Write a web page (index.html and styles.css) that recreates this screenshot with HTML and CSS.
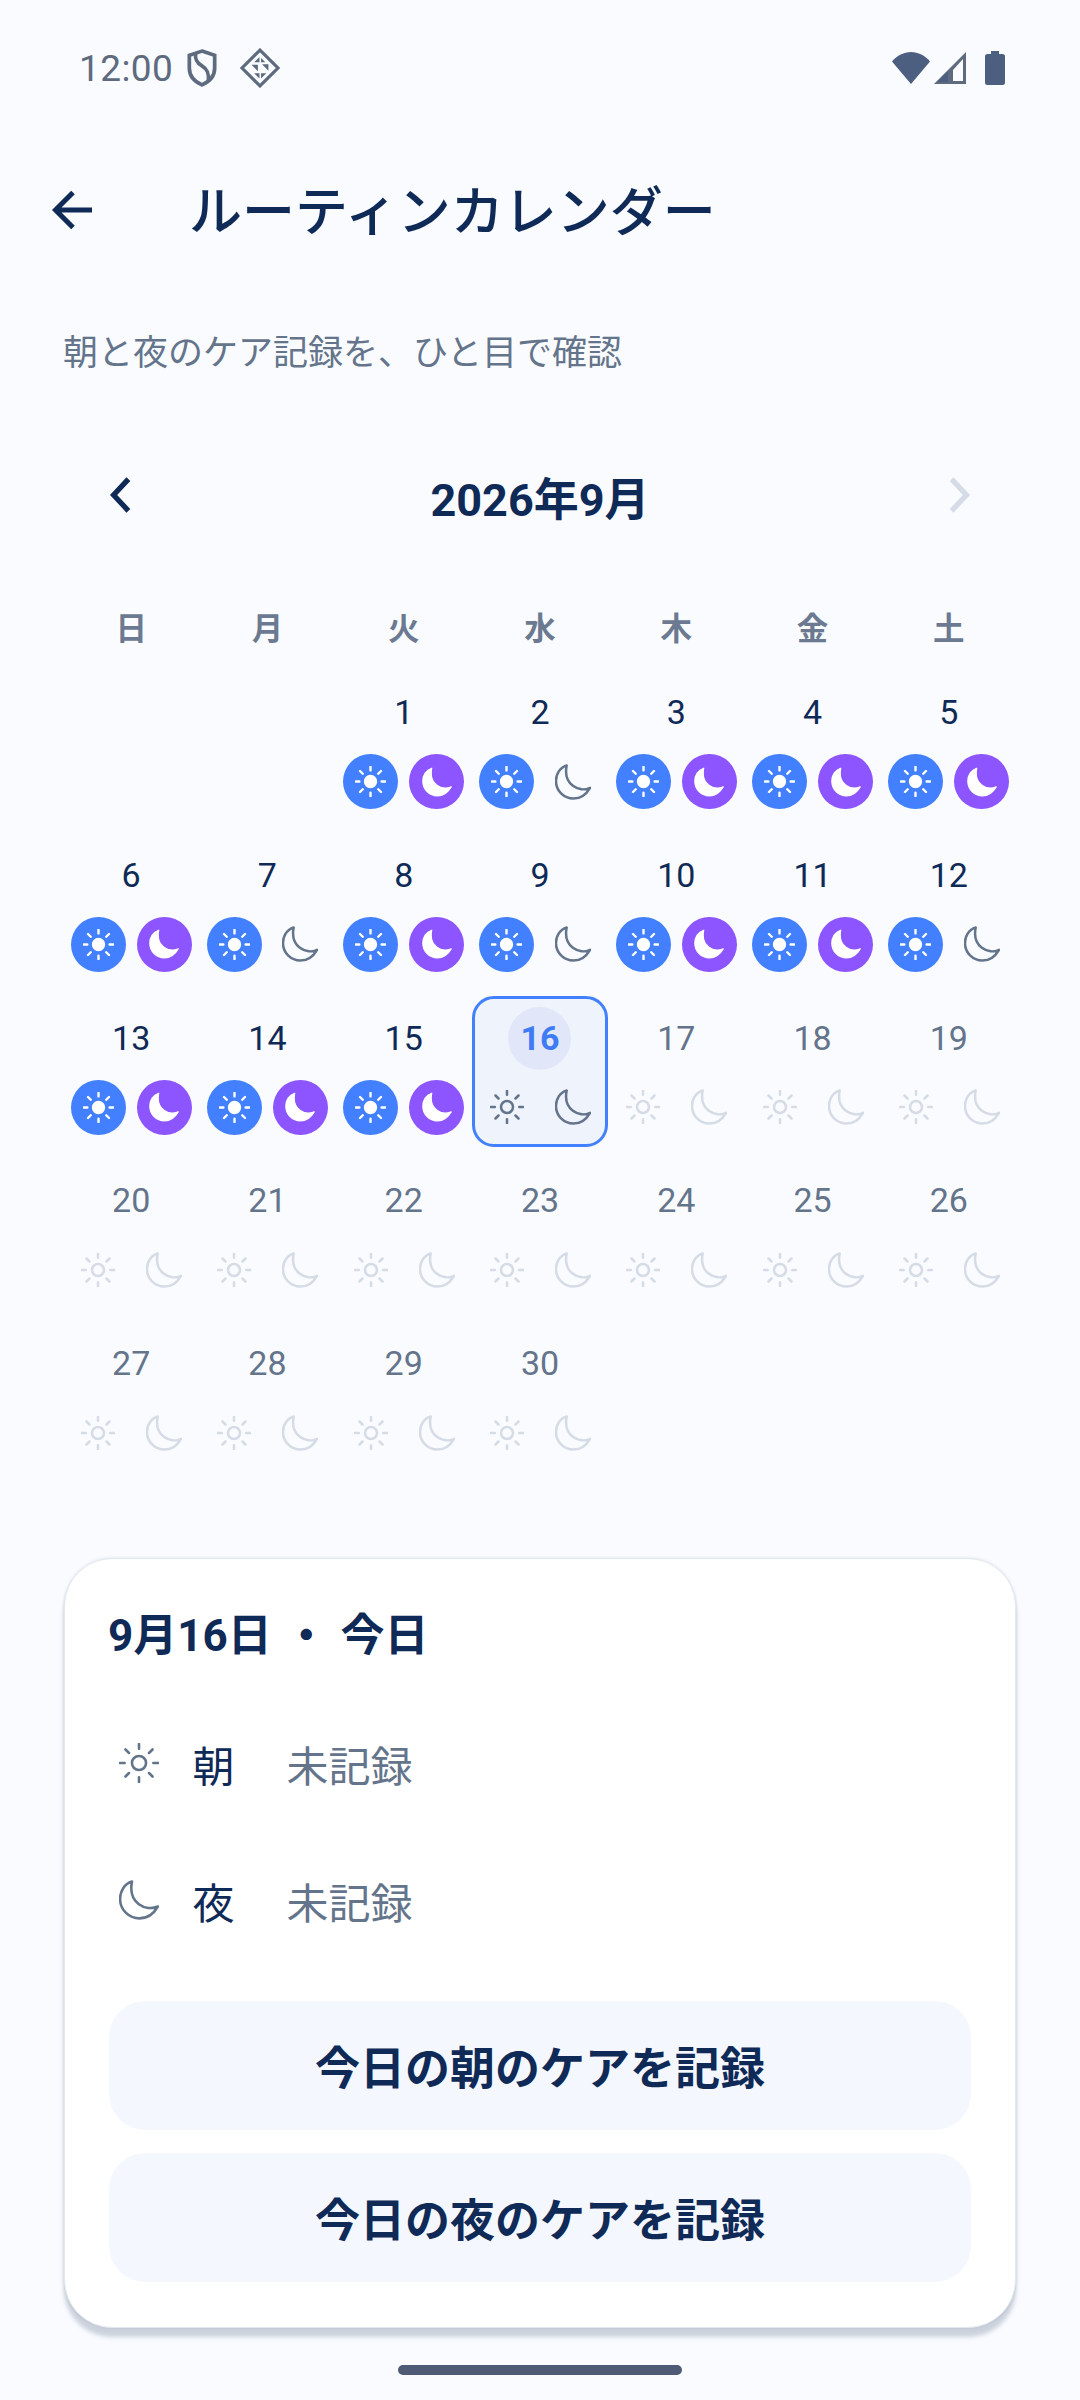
FILE: index.html
```html
<!DOCTYPE html>
<html lang="ja">
<head>
    <meta charset="UTF-8">
    <meta name="viewport" content="width=device-width, initial-scale=1.0">
    <title>ルーティンカレンダー</title>
    <link rel="stylesheet" href="styles.css">
</head>
<body>
    <svg class="defs" width="0" height="0">
        <symbol id="sun" viewBox="0 0 34 34">
            <circle cx="17" cy="17" r="6"/>
            <path class="rays" d="M17 .8v4M17 29.200v4M.8 17h4M29.200 17h4M5.500 5.500l3 3M25.500 25.500l3 3M5.500 28.500l3-3M25.500 8.500l3-3"/>
        </symbol>
        <symbol id="moon" viewBox="-1 -1 37 36">
            <path d="M11 0C4 2 0 9 0 16c0 10 8 18 18 18 7 0 13-4 17-11C24 28 7 20 11 0z"/>
        </symbol>
    </svg>

    <div class="status">
        <span class="clock">12:00</span>
        <svg class="st-shield" viewBox="0 0 30 36">
            <path d="M15 2l12 4v12c0 8-5 13-12 16C8 31 3 26 3 18V6z"/>
            <path d="M9 4c-1 6 1 9 6 12s7 7 6 15"/>
        </svg>
        <svg class="st-diamond" viewBox="0 0 38 38">
            <path class="line" d="M19 2l17 17-17 17L2 19z"/>
            <path class="tri" d="M18.500 8.500v5h-5zM20 9.500l4 4h-4zM11 16h6v6zM27 15.500v6l-6-6zM13.500 24h5v5zM20 24h5l-5 5z"/>
        </svg>
        <span class="st-right">
            <svg class="st-wifi" viewBox="0 0 38 32"><path d="M19 32L0 9.500C5 3.500 12 0 19 0s14 3.500 19 9.500z"/></svg>
            <svg class="st-signal" viewBox="0 0 32 32"><path class="hollow" d="M32 0v32H0zM29 7L19 18v11h10z"/><path d="M3 30l11-11v11z"/></svg>
            <svg class="st-battery" viewBox="0 0 20 34"><path d="M6 0h8v3h3.500q2.500 0 2.500 2.500v26q0 2.500-2.500 2.500h-15Q0 34 0 31.500v-26Q0 3 2.500 3H6z"/></svg>
        </span>
    </div>

    <header class="appbar">
        <svg class="back" viewBox="0 0 42 40"><path d="M40 20H4M21 2.500L3.500 20 21 37.500"/></svg>
        <h1>ルーティンカレンダー</h1>
    </header>

    <p class="subtitle">朝と夜のケア記録を、ひと目で確認</p>

    <div class="month">
        <svg class="chev" viewBox="0 0 24 36"><path d="M19 3L5 18l14 15"/></svg>
        <h2>2026年9月</h2>
        <svg class="chev off" viewBox="0 0 24 36"><path d="M5 3l14 15L5 33"/></svg>
    </div>

    <div class="weekdays">
        <span>日</span><span>月</span><span>火</span><span>水</span><span>木</span><span>金</span><span>土</span>
    </div>

    <div class="grid">
        <div class="day blank"></div>
        <div class="day blank"></div>
        <div class="day"><span class="num">1</span><div class="marks"><span class="mark am"><svg><use href="#sun"/></svg></span><span class="mark pm"><svg><use href="#moon"/></svg></span></div></div>
        <div class="day"><span class="num">2</span><div class="marks"><span class="mark am"><svg><use href="#sun"/></svg></span><span class="mark miss"><svg><use href="#moon"/></svg></span></div></div>
        <div class="day"><span class="num">3</span><div class="marks"><span class="mark am"><svg><use href="#sun"/></svg></span><span class="mark pm"><svg><use href="#moon"/></svg></span></div></div>
        <div class="day"><span class="num">4</span><div class="marks"><span class="mark am"><svg><use href="#sun"/></svg></span><span class="mark pm"><svg><use href="#moon"/></svg></span></div></div>
        <div class="day"><span class="num">5</span><div class="marks"><span class="mark am"><svg><use href="#sun"/></svg></span><span class="mark pm"><svg><use href="#moon"/></svg></span></div></div>

        <div class="day"><span class="num">6</span><div class="marks"><span class="mark am"><svg><use href="#sun"/></svg></span><span class="mark pm"><svg><use href="#moon"/></svg></span></div></div>
        <div class="day"><span class="num">7</span><div class="marks"><span class="mark am"><svg><use href="#sun"/></svg></span><span class="mark miss"><svg><use href="#moon"/></svg></span></div></div>
        <div class="day"><span class="num">8</span><div class="marks"><span class="mark am"><svg><use href="#sun"/></svg></span><span class="mark pm"><svg><use href="#moon"/></svg></span></div></div>
        <div class="day"><span class="num">9</span><div class="marks"><span class="mark am"><svg><use href="#sun"/></svg></span><span class="mark miss"><svg><use href="#moon"/></svg></span></div></div>
        <div class="day"><span class="num">10</span><div class="marks"><span class="mark am"><svg><use href="#sun"/></svg></span><span class="mark pm"><svg><use href="#moon"/></svg></span></div></div>
        <div class="day"><span class="num">11</span><div class="marks"><span class="mark am"><svg><use href="#sun"/></svg></span><span class="mark pm"><svg><use href="#moon"/></svg></span></div></div>
        <div class="day"><span class="num">12</span><div class="marks"><span class="mark am"><svg><use href="#sun"/></svg></span><span class="mark miss"><svg><use href="#moon"/></svg></span></div></div>

        <div class="day"><span class="num">13</span><div class="marks"><span class="mark am"><svg><use href="#sun"/></svg></span><span class="mark pm"><svg><use href="#moon"/></svg></span></div></div>
        <div class="day"><span class="num">14</span><div class="marks"><span class="mark am"><svg><use href="#sun"/></svg></span><span class="mark pm"><svg><use href="#moon"/></svg></span></div></div>
        <div class="day"><span class="num">15</span><div class="marks"><span class="mark am"><svg><use href="#sun"/></svg></span><span class="mark pm"><svg><use href="#moon"/></svg></span></div></div>
        <div class="day today"><span class="num">16</span><div class="marks"><span class="mark open"><svg><use href="#sun"/></svg></span><span class="mark miss"><svg><use href="#moon"/></svg></span></div></div>
        <div class="day future"><span class="num">17</span><div class="marks"><span class="mark open"><svg><use href="#sun"/></svg></span><span class="mark miss"><svg><use href="#moon"/></svg></span></div></div>
        <div class="day future"><span class="num">18</span><div class="marks"><span class="mark open"><svg><use href="#sun"/></svg></span><span class="mark miss"><svg><use href="#moon"/></svg></span></div></div>
        <div class="day future"><span class="num">19</span><div class="marks"><span class="mark open"><svg><use href="#sun"/></svg></span><span class="mark miss"><svg><use href="#moon"/></svg></span></div></div>

        <div class="day future"><span class="num">20</span><div class="marks"><span class="mark open"><svg><use href="#sun"/></svg></span><span class="mark miss"><svg><use href="#moon"/></svg></span></div></div>
        <div class="day future"><span class="num">21</span><div class="marks"><span class="mark open"><svg><use href="#sun"/></svg></span><span class="mark miss"><svg><use href="#moon"/></svg></span></div></div>
        <div class="day future"><span class="num">22</span><div class="marks"><span class="mark open"><svg><use href="#sun"/></svg></span><span class="mark miss"><svg><use href="#moon"/></svg></span></div></div>
        <div class="day future"><span class="num">23</span><div class="marks"><span class="mark open"><svg><use href="#sun"/></svg></span><span class="mark miss"><svg><use href="#moon"/></svg></span></div></div>
        <div class="day future"><span class="num">24</span><div class="marks"><span class="mark open"><svg><use href="#sun"/></svg></span><span class="mark miss"><svg><use href="#moon"/></svg></span></div></div>
        <div class="day future"><span class="num">25</span><div class="marks"><span class="mark open"><svg><use href="#sun"/></svg></span><span class="mark miss"><svg><use href="#moon"/></svg></span></div></div>
        <div class="day future"><span class="num">26</span><div class="marks"><span class="mark open"><svg><use href="#sun"/></svg></span><span class="mark miss"><svg><use href="#moon"/></svg></span></div></div>

        <div class="day future"><span class="num">27</span><div class="marks"><span class="mark open"><svg><use href="#sun"/></svg></span><span class="mark miss"><svg><use href="#moon"/></svg></span></div></div>
        <div class="day future"><span class="num">28</span><div class="marks"><span class="mark open"><svg><use href="#sun"/></svg></span><span class="mark miss"><svg><use href="#moon"/></svg></span></div></div>
        <div class="day future"><span class="num">29</span><div class="marks"><span class="mark open"><svg><use href="#sun"/></svg></span><span class="mark miss"><svg><use href="#moon"/></svg></span></div></div>
        <div class="day future"><span class="num">30</span><div class="marks"><span class="mark open"><svg><use href="#sun"/></svg></span><span class="mark miss"><svg><use href="#moon"/></svg></span></div></div>
    </div>

    <section class="card">
        <h3>9月16日 ・ 今日</h3>
        <div class="row">
            <svg class="row-sun"><use href="#sun"/></svg>
            <span class="row-label">朝</span>
            <span class="row-state">未記録</span>
        </div>
        <div class="row">
            <svg class="row-moon"><use href="#moon"/></svg>
            <span class="row-label">夜</span>
            <span class="row-state">未記録</span>
        </div>
        <div class="actions">
            <button>今日の朝のケアを記録</button>
            <button>今日の夜のケアを記録</button>
        </div>
    </section>

    <div class="home-bar"></div>
</body>
</html>
```

FILE: styles.css
```css
* {
    box-sizing: border-box;
}

body {
    margin: 0;
    width: 1080px;
    height: 2400px;
    overflow: hidden;
    background-color: #f9fbff;
    color: #0f2a56;
    font-family: Roboto, "Noto Sans CJK JP", sans-serif;
}

.defs {
    display: block;
    height: 0;
}

/* status bar */
.status {
    display: flex;
    align-items: center;
    height: 136px;
    padding: 0 75px 0 79px;
    color: #5e6a7e;
}

.clock {
    font-size: 37px;
    letter-spacing: 0.4px;
}

.st-shield {
    width: 32px;
    height: 38px;
    margin-left: 13px;
    fill: none;
    stroke: #5e6a7e;
    stroke-width: 3.5;
}

.st-diamond {
    width: 40px;
    height: 40px;
    margin-left: 22px;
}

.st-diamond .line {
    fill: none;
    stroke: #5e6a7e;
    stroke-width: 3;
}

.st-diamond .tri {
    fill: #5e6a7e;
}

.st-right {
    display: flex;
    align-items: center;
    margin-left: auto;
    fill: #4d5f80;
}

.st-wifi {
    width: 38px;
    height: 32px;
}

.st-signal {
    width: 32px;
    height: 32px;
    margin-left: 4px;
}

.st-signal .hollow {
    fill: #5e6a7e;
    fill-rule: evenodd;
}

.st-battery {
    width: 20px;
    height: 34px;
    margin-left: 19px;
}

/* app bar */
.appbar {
    display: flex;
    align-items: center;
    height: 148px;
    padding-left: 51px;
}

.back {
    width: 44px;
    height: 40px;
    fill: none;
    stroke: #0f2a56;
    stroke-width: 5;
}

.appbar h1 {
    margin: 5px 0 0 94px;
    font-size: 53px;
    font-weight: 500;
    line-height: 60px;
}

.subtitle {
    margin: 45px 0 0;
    padding-left: 63px;
    font-size: 35px;
    line-height: 50px;
    color: #64748b;
}

/* month switcher */
.month {
    display: flex;
    align-items: center;
    justify-content: space-between;
    height: 100px;
    margin-top: 67px;
    padding: 0 108px;
}

.month h2 {
    margin: 0;
    font-size: 45px;
    font-weight: 700;
}

.chev {
    width: 26px;
    height: 38px;
    margin-bottom: 3px;
    fill: none;
    stroke: #0f2a56;
    stroke-width: 5;
}

.chev.off {
    stroke: #d5dce7;
}

/* calendar */
.weekdays {
    display: grid;
    grid-template-columns: repeat(7, 1fr);
    height: 50px;
    margin: 59px 63px 0;
    font-size: 31.5px;
    font-weight: 700;
    line-height: 50px;
    text-align: center;
    color: #6b7a90;
}

.grid {
    display: grid;
    grid-template-columns: repeat(7, 1fr);
    grid-auto-rows: 151px;
    row-gap: 11.75px;
    margin: 15px 63px 0;
}

.day {
    display: flex;
    flex-direction: column;
    align-items: center;
    padding-top: 11px;
}

.num {
    width: 63px;
    height: 63px;
    border-radius: 50%;
    font-size: 34px;
    line-height: 63px;
    text-align: center;
}

.marks {
    display: flex;
    gap: 11px;
    margin-top: 10px;
}

.mark {
    display: flex;
    align-items: center;
    justify-content: center;
    width: 55px;
    height: 55px;
    border-radius: 50%;
}

.mark svg {
    display: block;
    overflow: visible;
}

.mark.am {
    background-color: #4280ff;
}

.mark.am svg {
    width: 31px;
    height: 31px;
    fill: #fff;
    stroke: #fff;
    stroke-width: 2.6;
    stroke-linecap: round;
}

.mark.pm {
    background-color: #8c55ff;
}

.mark.pm svg {
    width: 30px;
    height: 30px;
    fill: #fff;
    stroke: #fff;
    stroke-width: 1.5;
    stroke-linejoin: round;
}

.mark.miss svg {
    width: 36px;
    height: 36px;
    fill: none;
    stroke: #64748b;
    stroke-width: 2.6;
    stroke-linejoin: round;
}

.mark.open svg {
    width: 34px;
    height: 34px;
    fill: none;
    stroke: #64748b;
    stroke-width: 2.5;
    stroke-linecap: round;
}

.day.today {
    padding-top: 8px;
    border: 3px solid #4280ff;
    border-radius: 22px;
    background-color: #eef3fc;
}

.day.today .num {
    background-color: #e1e7f8;
    font-weight: 700;
    color: #3f7bf4;
}

.day.today .marks {
    margin-top: 10px;
}

.day.future .num {
    color: #64748b;
}

.day.future .mark svg {
    stroke: #d5dce6;
}

/* detail card */
.card {
    height: 770px;
    margin: 86px 64px 0;
    padding: 50px 44px 0;
    border: 1px solid #e2e8f0;
    border-radius: 48px;
    background-color: #fff;
    box-shadow: 0 9px 4px rgba(100, 116, 139, 0.3), 0 0 3px rgba(100, 116, 139, 0.2);
}

.card h3 {
    margin: 0 0 31.5px -1px;
    font-size: 44px;
    font-weight: 700;
    line-height: 54px;
    word-spacing: 1.5px;
}

.row {
    display: flex;
    align-items: center;
    height: 137px;
    font-size: 42px;
}

.row-sun {
    width: 40px;
    height: 40px;
    margin-left: 9.5px;
    overflow: visible;
    fill: none;
    stroke: #64748b;
    stroke-width: 2.2;
    stroke-linecap: round;
}

.row-moon {
    width: 40px;
    height: 40px;
    margin-left: 9.5px;
    overflow: visible;
    fill: none;
    stroke: #64748b;
    stroke-width: 2.4;
    stroke-linejoin: round;
}

.row-label {
    margin-left: 34px;
}

.row-state {
    margin-left: 52px;
    color: #64748b;
}

.actions {
    display: flex;
    flex-direction: column;
    gap: 23px;
    margin-top: 32.5px;
}

button {
    height: 129px;
    border: none;
    border-radius: 36px;
    background-color: #f4f7fe;
    font-family: inherit;
    font-size: 45px;
    font-weight: 700;
    color: #0f2a56;
}

.home-bar {
    width: 284px;
    height: 10px;
    margin: 37px auto 0;
    border-radius: 5px;
    background-color: #4f5b75;
}
```
